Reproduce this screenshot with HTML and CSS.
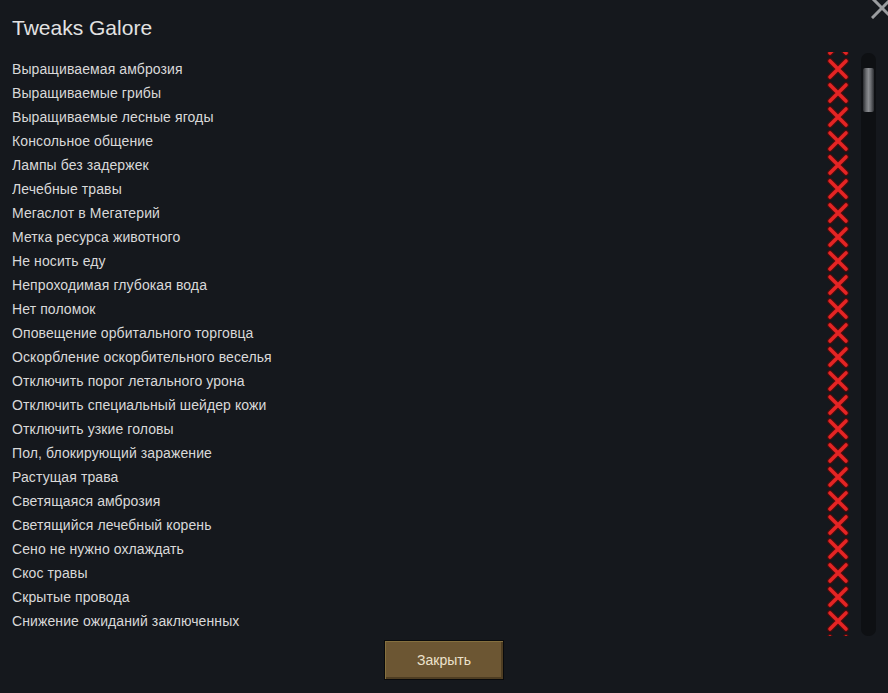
FILE: index.html
```html
<!DOCTYPE html>
<html lang="ru">
<head>
    <meta charset="UTF-8">
    <meta name="viewport" content="width=device-width, initial-scale=1.0">
    <title>Tweaks Galore</title>
    <link rel="stylesheet" href="styles.css">
</head>
<body>
    <div class="window">
        <svg class="close-icon" width="22" height="22" viewBox="0 0 22 22">
            <path d="M2 2 L20 20 M20 2 L2 20" stroke="#9a9c9f" stroke-width="3" stroke-linecap="square"/>
        </svg>
        <h1 class="title">Tweaks Galore</h1>
        <div class="list-area">
            <div class="viewport">
                <ul class="tweak-list" id="tweak-list"></ul>
            </div>
            <div class="scrollbar">
                <div class="thumb"></div>
            </div>
        </div>
        <div class="footer">
            <button class="close-button">Закрыть</button>
        </div>
    </div>
    <script>
        // first and last rows are only partly scrolled into view
        const tweaks = [
            "",
            "Выращиваемая амброзия",
            "Выращиваемые грибы",
            "Выращиваемые лесные ягоды",
            "Консольное общение",
            "Лампы без задержек",
            "Лечебные травы",
            "Мегаслот в Мегатерий",
            "Метка ресурса животного",
            "Не носить еду",
            "Непроходимая глубокая вода",
            "Нет поломок",
            "Оповещение орбитального торговца",
            "Оскорбление оскорбительного веселья",
            "Отключить порог летального урона",
            "Отключить специальный шейдер кожи",
            "Отключить узкие головы",
            "Пол, блокирующий заражение",
            "Растущая трава",
            "Светящаяся амброзия",
            "Светящийся лечебный корень",
            "Сено не нужно охлаждать",
            "Скос травы",
            "Скрытые провода",
            "Снижение ожиданий заключенных",
            ""
        ];
        const list = document.getElementById("tweak-list");

        tweaks.forEach((name) => {
            const row = document.createElement("li");
            row.className = "tweak-row";
            row.innerHTML = `
                <span class="tweak-name">${name}</span>
                <svg class="toggle-off" width="24" height="24" viewBox="0 0 24 24">
                    <path d="M4 4 L20 20 M20 4 L4 20" stroke="#4a0d0d" stroke-width="6" stroke-linecap="round"/>
                    <path d="M4 4 L20 20 M20 4 L4 20" stroke="#e52424" stroke-width="3.6" stroke-linecap="round"/>
                </svg>
            `;
            list.appendChild(row);
        });
    </script>
</body>
</html>
```

FILE: styles.css
```css
html, body {
    height: 693px;
    overflow: hidden;
}
body {
    margin: 0;
    padding: 0;
    font-family: "Liberation Sans", Arial, sans-serif;
    background-color: #15181d;
    color: #d9d9d9;
}
.window {
    position: relative;
    height: 100%;
    padding: 16px 12px 0 12px;
    box-sizing: border-box;
}
.close-icon {
    position: absolute;
    top: -3px;
    left: 871px;
}
.title {
    margin: 0 0 12px 0;
    font-size: 21px;
    font-weight: normal;
    line-height: 24px;
    color: #e2e2e2;
}
.list-area {
    display: flex;
    gap: 11px;
    height: 584px;
}
.viewport {
    flex: 1;
    overflow: hidden;
}
.tweak-list {
    list-style: none;
    margin: -19px 0 0 0;
    padding: 0;
}
.tweak-row {
    display: flex;
    align-items: center;
    justify-content: space-between;
    height: 24px;
    font-size: 14px;
    line-height: 24px;
    letter-spacing: 0.1px;
}
.toggle-off {
    display: block;
    flex-shrink: 0;
}
.scrollbar {
    width: 15px;
    margin-top: 1px;
    background-color: #0e1013;
    border-radius: 7px;
    padding-top: 15px;
    box-sizing: border-box;
}
.thumb {
    width: 11px;
    height: 44px;
    margin: 0 auto;
    border-radius: 2px;
    background: linear-gradient(to right, #2a2c30, #6d6f73 30%, #8a8c90 50%, #6d6f73 70%, #2a2c30);
}
.footer {
    display: flex;
    justify-content: center;
    margin-top: 4px;
}
.close-button {
    width: 120px;
    height: 40px;
    font-family: "Liberation Sans", Arial, sans-serif;
    font-size: 14px;
    color: #ece2cc;
    background-color: #6c5633;
    border: 1px solid #090a0c;
    box-shadow: inset 1px 1px 0 #85703f, inset -2px -2px 0 #4e3d22;
    cursor: pointer;
}
```
